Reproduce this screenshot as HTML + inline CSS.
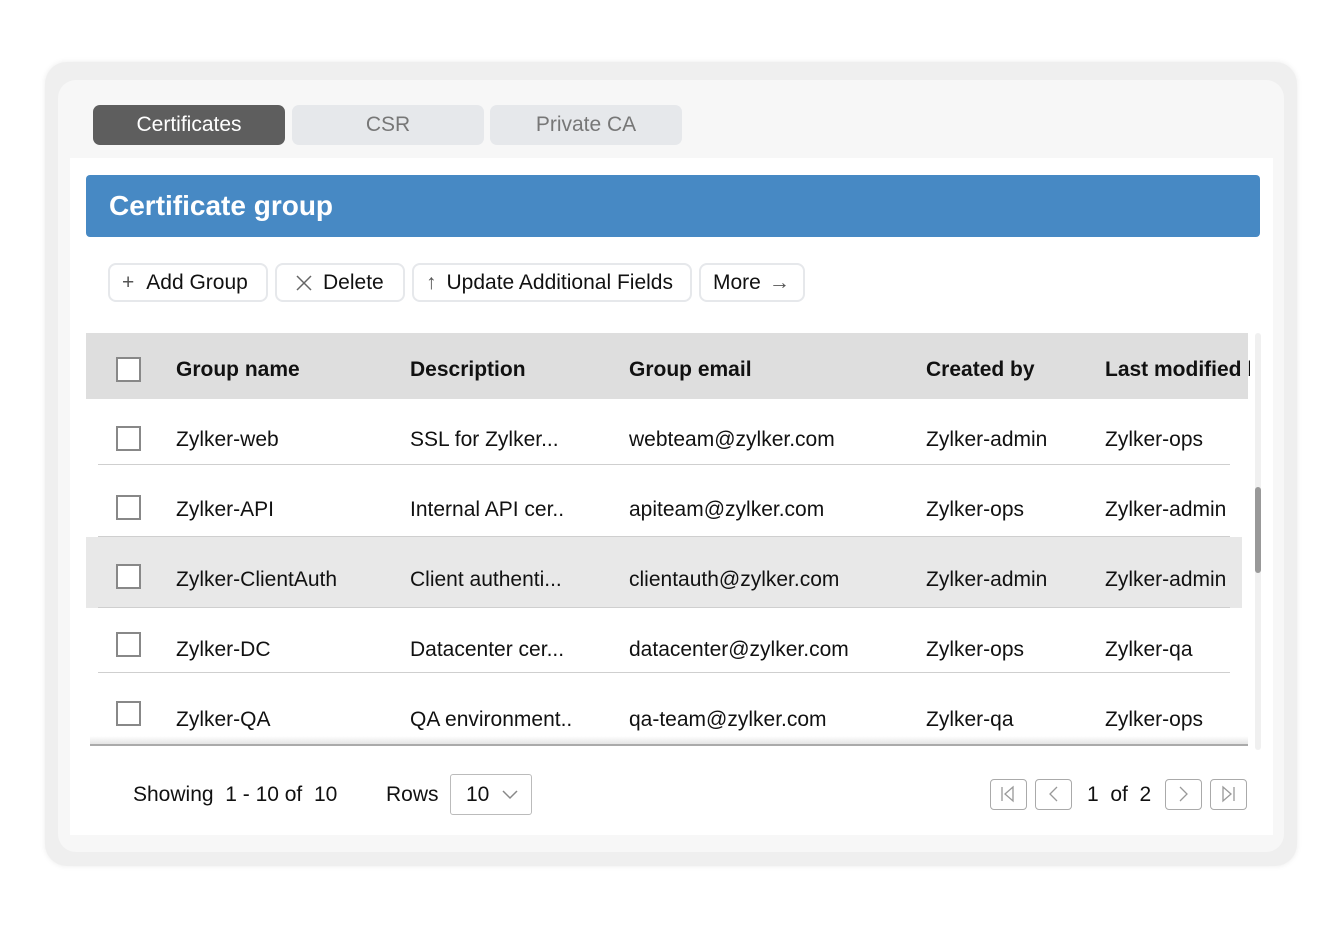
<!DOCTYPE html>
<html><head><style>
*{box-sizing:border-box;margin:0;padding:0}
body{width:1344px;height:930px;background:#fff;font-family:"Liberation Sans",sans-serif;position:relative;overflow:hidden;color:#111}
.a{position:absolute}
.outer{left:45px;top:62px;width:1252px;height:804px;background:#efefef;border-radius:22px;box-shadow:0 0 6px rgba(0,0,0,.08)}
.inner{left:58px;top:80px;width:1226px;height:772px;background:#f7f7f7;border-radius:18px}
.tab{top:105px;height:40px;width:192px;border-radius:7px;font-size:21px;display:flex;align-items:center;justify-content:center}
.panel{left:70px;top:158px;width:1203px;height:677px;background:#fff}
.blue{left:86px;top:175px;width:1174px;height:62px;background:#4789c4;border-radius:4px;color:#fff;font-size:28px;font-weight:bold;padding-left:23px;line-height:62px}
.btn{top:263px;height:39px;border:2px solid #e6e8eb;border-radius:8px;font-size:21px;display:flex;align-items:center;padding-left:12px;color:#111}
.th{left:86px;top:333px;width:1162px;height:66px;background:#dedede}
.cb{width:25px;height:25px;border:2px solid #888;background:#fff}
.t{font-size:21px;white-space:nowrap}
.b{font-weight:bold}
.line{height:1px;background:#cfcfcf;left:98px;width:1132px}
.pg{width:37px;height:31px;border:1.5px solid #aaa;border-radius:4px;top:779px}
</style></head><body>
<div class="a outer"></div>
<div class="a inner"></div>
<div class="a tab" style="left:93px;background:#5e5e5e;color:#fff">Certificates</div>
<div class="a tab" style="left:292px;background:#e6e8eb;color:#777">CSR</div>
<div class="a tab" style="left:490px;background:#e6e8eb;color:#777">Private CA</div>
<div class="a panel"></div>
<div class="a blue">Certificate group</div>
<div class="a btn" style="left:108px;width:160px"><span style="color:#555;margin-right:12px">+</span>Add Group</div>
<div class="a btn" style="left:275px;width:130px"><svg width="18" height="18" style="margin:0 10px 0 6px"><path d="M2 2l14 14M16 2L2 16" stroke="#666" stroke-width="1.5"/></svg>Delete</div>
<div class="a btn" style="left:412px;width:280px"><span style="color:#555;margin-right:10px">↑</span>Update Additional Fields</div>
<div class="a btn" style="left:699px;width:106px">More <span style="color:#555;margin-left:8px">→</span></div>
<div class="a th"></div>
<div class="a" style="left:86px;top:537px;width:1156px;height:71px;background:#e8e8e8"></div>
<div class="a" style="left:1255px;top:333px;width:6px;height:417px;background:#f0f0f0;border-radius:3px"></div>
<div class="a" style="left:1255px;top:487px;width:6px;height:86px;background:#999;border-radius:3px"></div>
<div class="a cb" style="left:116px;top:357px"></div>
<div class="a t b" style="left:176px;top:358px">Group name</div>
<div class="a t b" style="left:410px;top:358px">Description</div>
<div class="a t b" style="left:629px;top:358px">Group email</div>
<div class="a t b" style="left:926px;top:358px">Created by</div>
<div class="a t b" style="left:1105px;top:358px;width:145px;overflow:hidden">Last modified by</div>

<div class="a cb" style="left:116px;top:426px"></div>
<div class="a t" style="left:176px;top:428px">Zylker-web</div><div class="a t" style="left:410px;top:428px">SSL for Zylker...</div><div class="a t" style="left:629px;top:428px">webteam@zylker.com</div><div class="a t" style="left:926px;top:428px">Zylker-admin</div><div class="a t" style="left:1105px;top:428px">Zylker-ops</div>
<div class="a line" style="top:464px"></div>

<div class="a cb" style="left:116px;top:495px"></div>
<div class="a t" style="left:176px;top:498px">Zylker-API</div><div class="a t" style="left:410px;top:498px">Internal API cer..</div><div class="a t" style="left:629px;top:498px">apiteam@zylker.com</div><div class="a t" style="left:926px;top:498px">Zylker-ops</div><div class="a t" style="left:1105px;top:498px">Zylker-admin</div>
<div class="a line" style="top:536px"></div>

<div class="a cb" style="left:116px;top:564px"></div>
<div class="a t" style="left:176px;top:568px">Zylker-ClientAuth</div><div class="a t" style="left:410px;top:568px">Client authenti...</div><div class="a t" style="left:629px;top:568px">clientauth@zylker.com</div><div class="a t" style="left:926px;top:568px">Zylker-admin</div><div class="a t" style="left:1105px;top:568px">Zylker-admin</div>
<div class="a line" style="top:607px"></div>

<div class="a cb" style="left:116px;top:632px"></div>
<div class="a t" style="left:176px;top:638px">Zylker-DC</div><div class="a t" style="left:410px;top:638px">Datacenter cer...</div><div class="a t" style="left:629px;top:638px">datacenter@zylker.com</div><div class="a t" style="left:926px;top:638px">Zylker-ops</div><div class="a t" style="left:1105px;top:638px">Zylker-qa</div>
<div class="a line" style="top:672px"></div>

<div class="a cb" style="left:116px;top:701px"></div>
<div class="a t" style="left:176px;top:708px">Zylker-QA</div><div class="a t" style="left:410px;top:708px">QA environment..</div><div class="a t" style="left:629px;top:708px">qa-team@zylker.com</div><div class="a t" style="left:926px;top:708px">Zylker-qa</div><div class="a t" style="left:1105px;top:708px">Zylker-ops</div>
<div class="a" style="left:90px;top:736px;width:1158px;height:8px;background:linear-gradient(#fff0,#e4e4e4)"></div>
<div class="a" style="left:90px;top:744px;width:1158px;height:1.5px;background:#aaa"></div>

<div class="a t" style="left:133px;top:783px">Showing &nbsp;1 - 10 of &nbsp;10</div>
<div class="a t" style="left:386px;top:783px">Rows</div>
<div class="a" style="left:450px;top:774px;width:82px;height:41px;border:1.5px solid #bbb;border-radius:3px"></div>
<div class="a t" style="left:466px;top:783px">10</div>
<svg class="a" style="left:502px;top:788px" width="16" height="12"><path d="M1 3l7 7 7-7" fill="none" stroke="#888" stroke-width="1.5"/></svg>
<div class="a pg" style="left:990px"><svg width="34" height="28"><path d="M11 7v14M22 7l-8 7 8 7z" fill="none" stroke="#999" stroke-width="1.3"/></svg></div>
<div class="a pg" style="left:1035px"><svg width="34" height="28"><path d="M21 7l-7 7 7 7" fill="none" stroke="#999" stroke-width="1.3"/></svg></div>
<div class="a t" style="left:1087px;top:783px">1 &nbsp;of &nbsp;2</div>
<div class="a pg" style="left:1165px"><svg width="34" height="28"><path d="M14 7l7 7-7 7" fill="none" stroke="#999" stroke-width="1.3"/></svg></div>
<div class="a pg" style="left:1210px"><svg width="34" height="28"><path d="M23 7v14M12 7l8 7-8 7z" fill="none" stroke="#999" stroke-width="1.3"/></svg></div>
</body></html>
